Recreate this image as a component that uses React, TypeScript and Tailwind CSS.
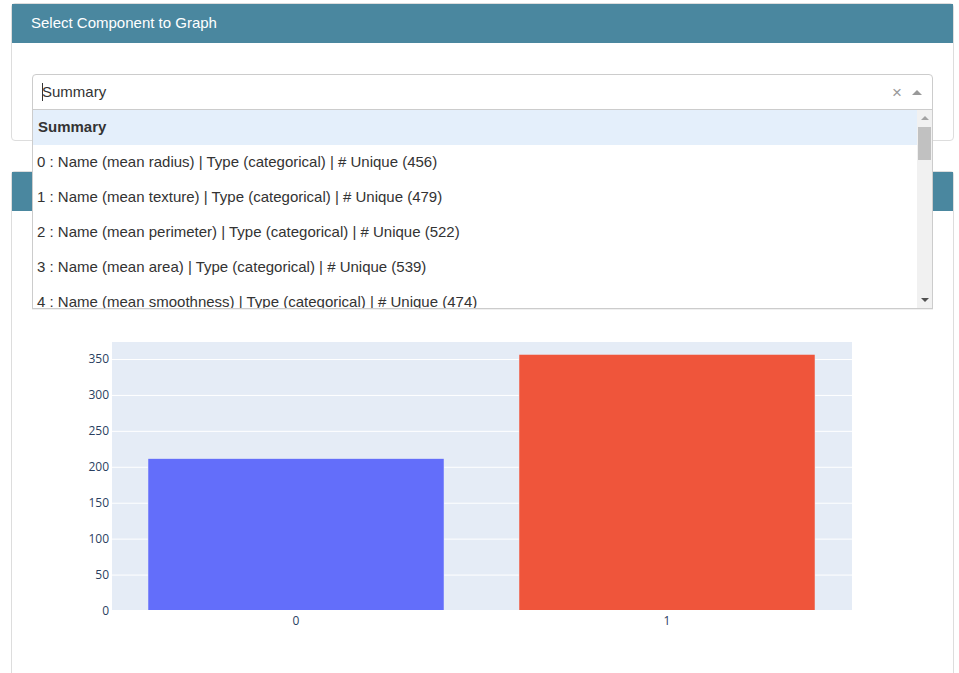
const options = [
  "0 : Name (mean radius) | Type (categorical) | # Unique (456)",
  "1 : Name (mean texture) | Type (categorical) | # Unique (479)",
  "2 : Name (mean perimeter) | Type (categorical) | # Unique (522)",
  "3 : Name (mean area) | Type (categorical) | # Unique (539)",
  "4 : Name (mean smoothness) | Type (categorical) | # Unique (474)",
];

const bars = [
  { label: "0", value: 212, x: 136, color: "#636efa" },
  { label: "1", value: 357, x: 507, color: "#ef553b" },
];

// svg sits at card inner origin (12, 211); zero line at y=400
const scale = 0.7186;
const y0 = 400;
const ticks = [0, 50, 100, 150, 200, 250, 300, 350];

const SelectBox: React.FC = () => {
  return (
    <div className="relative">
      <div className="flex h-[36px] items-center rounded-t-[4px] border border-[#cccccc] bg-white pl-[9px] pr-[10px]">
        <span className="mr-[-1px] h-[18px] w-px bg-[#333]" />
        <span className="flex-1 text-[15px] text-[#333]">Summary</span>
        <span className="mr-[10px] text-[17px] leading-none text-[#999]">×</span>
        <span className="h-0 w-0 border-x-[5px] border-b-[5px] border-x-transparent border-b-[#999]" />
      </div>
      <div className="absolute left-0 right-0 top-[35px] z-10 flex h-[200px] border border-[#cccccc] bg-white shadow-[0_1px_0_rgba(0,0,0,0.06)]">
        <div className="flex-1 overflow-hidden">
          <div className="flex h-[35px] items-center bg-[#e4effb] px-[5px] text-[15px] font-bold text-[#333]">
            Summary
          </div>
          {options.map((o) => (
            <div
              key={o}
              className="flex h-[35px] items-center px-[4px] text-[15px] text-[#333] whitespace-nowrap"
            >
              {o}
            </div>
          ))}
        </div>
        <div className="flex w-[15px] flex-col items-center bg-[#f1f1f1]">
          <span className="mt-[6px] h-0 w-0 border-x-[4px] border-b-[4px] border-x-transparent border-b-[#a3a3a3]" />
          <span className="mt-[7px] h-[33px] w-[13px] bg-[#c1c1c1]" />
          <span className="flex-1" />
          <span className="mb-[6px] h-0 w-0 border-x-[4px] border-t-[4px] border-x-transparent border-t-[#505050]" />
        </div>
      </div>
    </div>
  );
};

const BarChart: React.FC = () => {
  return (
    <svg width="940" height="470" className="block">
      <rect x="100" y="131" width="740" height="269" fill="#e5ecf6" />
      {ticks.map((t) => {
        const y = y0 - t * scale;
        return (
          <g key={t}>
            {t > 0 && (
              <line x1="100" x2="840" y1={y} y2={y} stroke="#ffffff" strokeWidth="1" />
            )}
            <text
              x="97"
              y={y + 4}
              textAnchor="end"
              fontSize="12"
              fill="#2a3f5f"
              fontFamily="'Open Sans', Verdana, Arial, sans-serif"
            >
              {t}
            </text>
          </g>
        );
      })}
      {bars.map((b) => {
        const h = b.value * scale;
        return (
          <g key={b.label}>
            <rect
              x={b.x}
              y={y0 - h}
              width="296"
              height={h}
              fill={b.color}
              stroke="#e5ecf6"
              strokeWidth="0.5"
            />
            <text
              x={b.x + 148}
              y="414"
              textAnchor="middle"
              fontSize="12"
              fill="#2a3f5f"
              fontFamily="'Open Sans', Verdana, Arial, sans-serif"
            >
              {b.label}
            </text>
          </g>
        );
      })}
      <line x1="100" x2="840" y1={y0} y2={y0} stroke="#ffffff" strokeWidth="2" />
    </svg>
  );
};

export default function App() {
  return (
    <div className="min-h-screen bg-white pt-[3px] font-['Liberation_Sans',Arial,sans-serif]">
      <div className="mx-[11px] w-[943px] rounded-[4px] border border-[#dddddd] bg-white">
        <div className="flex h-[39px] items-center bg-[#4a879f] px-[19px] text-[15px] text-white">
          Select Component to Graph
        </div>
        <div className="px-[20px] pb-[30px] pt-[31px]">
          <SelectBox />
        </div>
      </div>
      <div className="mx-[11px] mt-[30px] w-[943px] rounded-t-[4px] border border-b-0 border-[#dddddd] bg-white">
        <div className="h-[39px] bg-[#4a879f]" />
        <BarChart />
      </div>
    </div>
  );
}
